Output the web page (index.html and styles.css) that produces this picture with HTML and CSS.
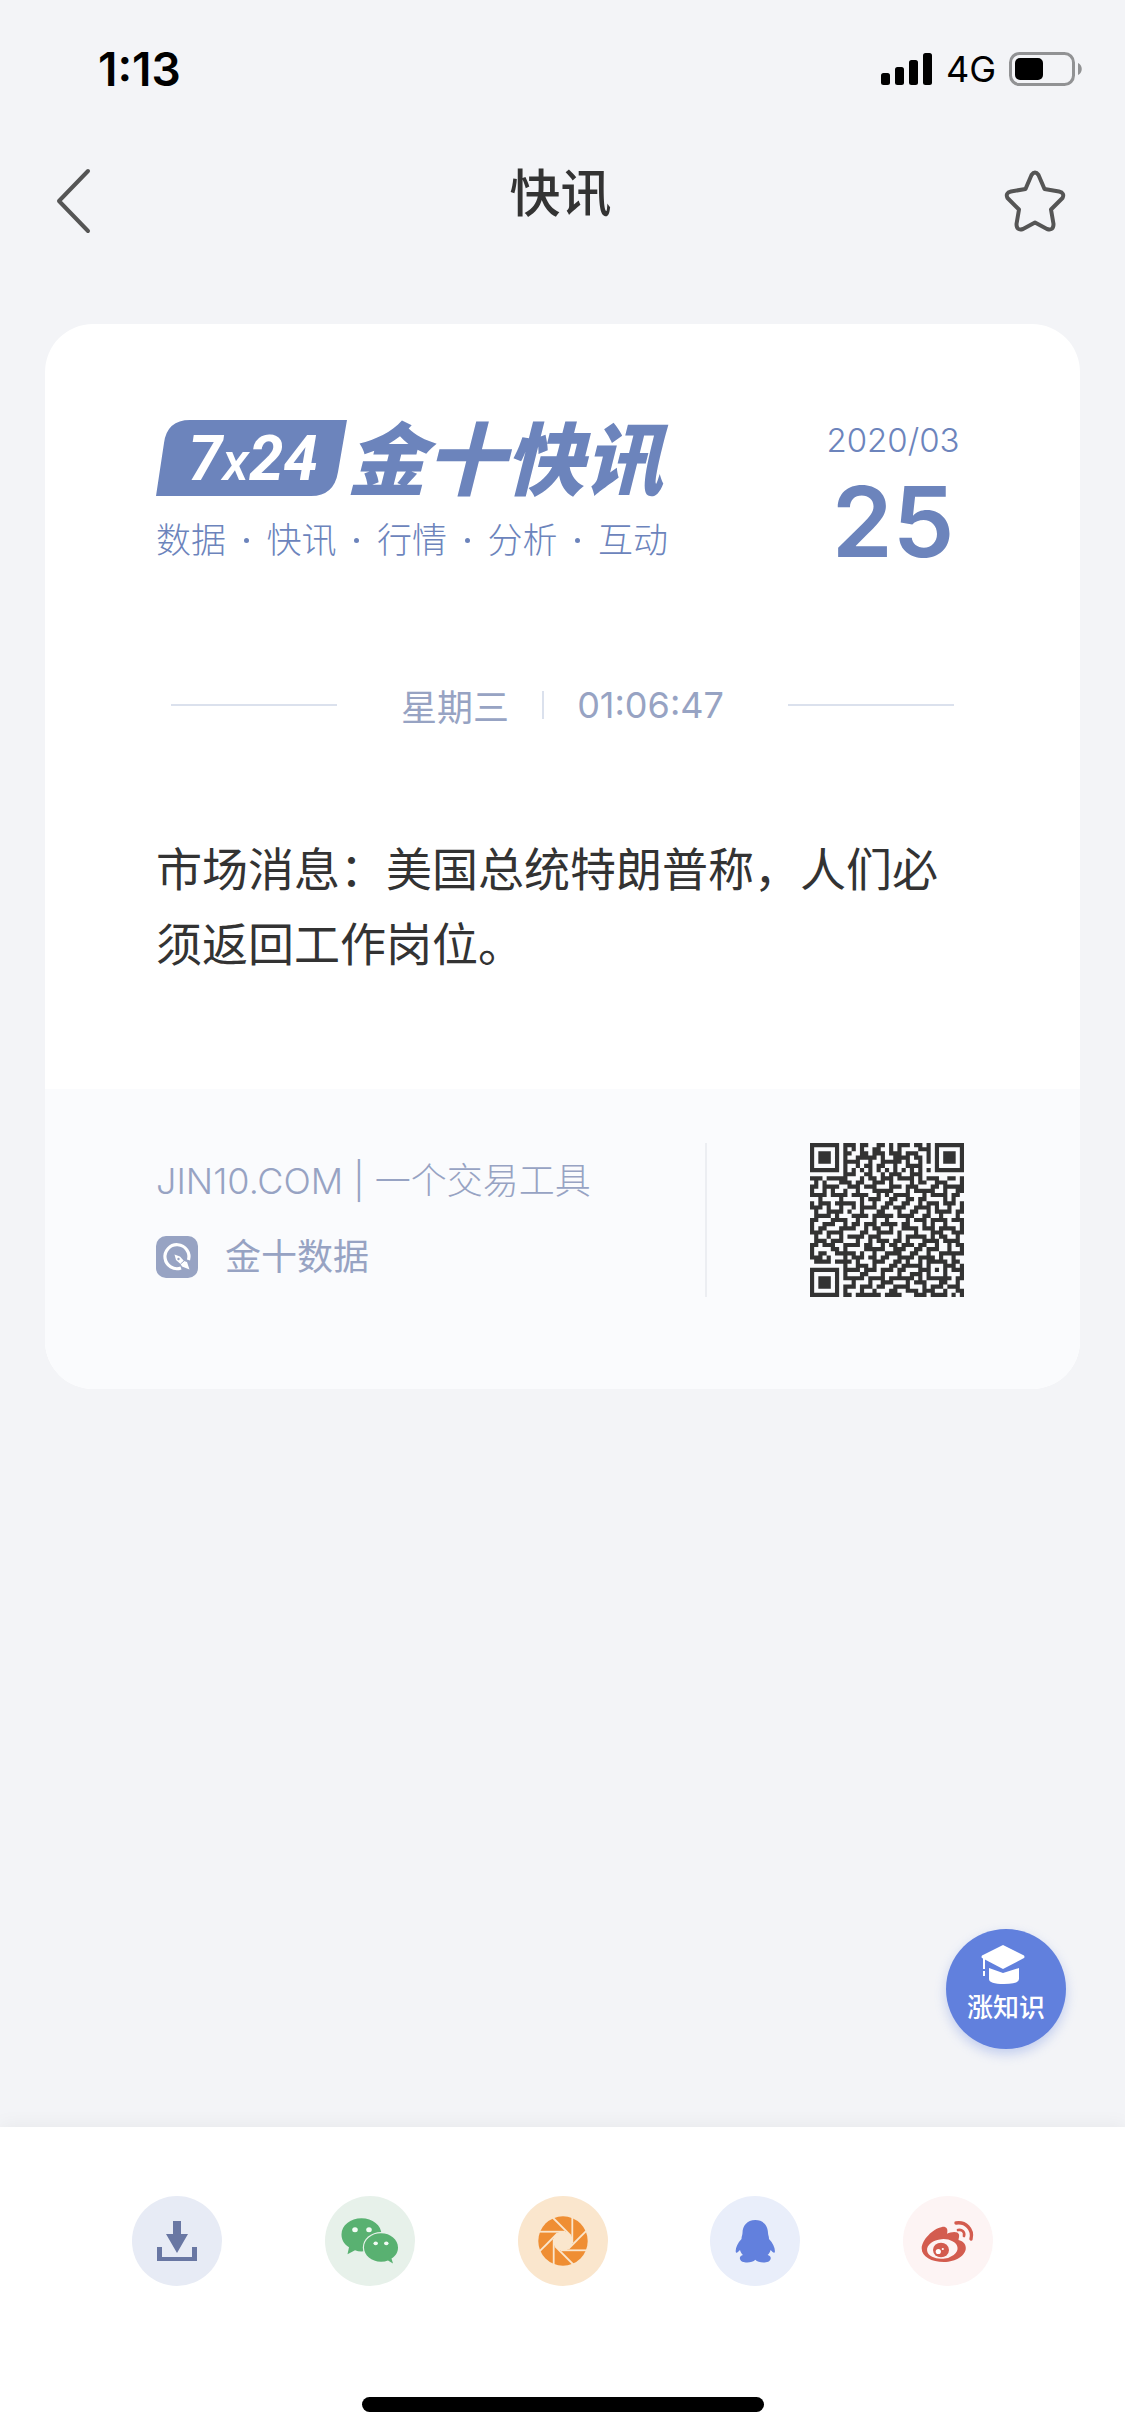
FILE: index.html
```html
<!DOCTYPE html>
<html lang="zh-CN">
<head>
<meta charset="utf-8">
<meta name="viewport" content="width=device-width, initial-scale=1">
<title>快讯</title>
<link rel="stylesheet" href="styles.css">
</head>
<body>
<div class="app">
  <div class="status">
    <span class="clock">1:13</span>
    <div class="signals">
      <svg width="52" height="32" viewBox="0 0 52 32" aria-hidden="true"><rect x="0" y="20" width="9" height="12" rx="2.5"/><rect x="14" y="14" width="9" height="18" rx="2.5"/><rect x="28" y="7" width="9" height="25" rx="2.5"/><rect x="42" y="0" width="9" height="32" rx="2.5"/></svg>
      <span class="network">4G</span>
      <svg width="74" height="34" viewBox="0 0 74 34" aria-hidden="true"><rect x="1.5" y="1.5" width="63" height="31" rx="9" fill="none" stroke="#919294" stroke-width="3"/><rect x="6" y="6" width="28" height="22" rx="5"/><path d="M69 11c5 2 5 10 0 12z" fill="#919294"/></svg>
    </div>
  </div>
  <header class="nav">
    <button class="icon-button" aria-label="返回"><svg width="36" height="66" viewBox="0 0 36 66" fill="none" stroke="#555" stroke-width="4" stroke-linecap="round" stroke-linejoin="round"><path d="M33 3 4 33l29 30"/></svg></button>
    <h1 class="title">快讯</h1>
    <button class="icon-button" aria-label="收藏"><svg width="62" height="62" viewBox="0 0 62 62" fill="none" stroke="#555" stroke-width="4" stroke-linejoin="round"><path d="M27.500 5Q31 0 34.500 5L40.500 19 55 21.500Q61 23 58.500 28L47 39.500 49.500 54Q49.500 61 43 59L31 52.500 19 59Q12.500 61 12.500 54L15 39.500 3.500 28Q1 23 7 21.500L21.500 19Z"/></svg></button>
  </header>

  <main class="main">
    <article class="card">
      <div class="card-body">
        <div class="card-top">
          <div class="brand">
            <div class="logo">
              <svg class="badge" width="191" height="76" viewBox="0 0 191 76"><path d="M0 76 8 23Q11 0 34 0H191L182 52Q178 76 155 76Z" fill="#6c84bc"/><text x="97" y="60" class="badge-text" text-anchor="middle">7<tspan class="badge-x">x</tspan>24</text></svg>
              <span class="logo-name">金十快讯</span>
            </div>
            <p class="topics"><span>数据</span><i class="dot"></i><span>快讯</span><i class="dot"></i><span>行情</span><i class="dot"></i><span>分析</span><i class="dot"></i><span>互动</span></p>
          </div>
          <div class="date"><span class="month">2020/03</span><span class="day">25</span></div>
        </div>
        <div class="timeline">
          <span class="rule"></span>
          <div class="moment"><span>星期三</span><span class="bar"></span><time>01:06:47</time></div>
          <span class="rule"></span>
        </div>
        <p class="news">市场消息：美国总统特朗普称，人们必须返回工作岗位。</p>
      </div>
      <footer class="card-foot">
        <div class="source">
          <p class="slogan">JIN10.COM | 一个交易工具</p>
          <p class="product">
            <svg width="42" height="42" viewBox="0 0 42 42" aria-hidden="true"><rect width="42" height="42" rx="10" fill="#97a3c3"/><path d="M32.500 24A12 12 0 1 0 25 32" fill="none" stroke="#fff" stroke-width="3.200"/><path d="M18.500 18.500 24 20.500 28 25 31 26 33.500 33.500 26 30.500 24.500 28 20 24Z" fill="#fff"/><circle cx="22.500" cy="23" r="1.200" fill="#97a3c3"/><path d="m24.500 28 4-3.500" stroke="#97a3c3"/></svg>
            金十数据
          </p>
        </div>
        <svg class="qr" width="154" height="154" viewBox="0 0 37 37" role="img" aria-label="二维码"><path id="qr-modules" fill="#333"/></svg>
      </footer>
    </article>
  </main>

  <button class="learn">
    <svg class="cap" width="44" height="40" viewBox="0 0 44 40" fill="#fff" aria-hidden="true"><path d="M22 0 43 10.500Q44 12 43 13L22 24 1 13Q0 12 1 10.500Z"/><path d="m8 23 14 5 16-5v11q0 5-15 5T8 34z"/><path d="M2 13h2v11H2zM2 26h2v5H2z"/></svg>
    <span>涨知识</span>
  </button>

  <div class="share">
    <div class="share-row">
      <button class="share-item save" aria-label="保存"><svg viewBox="0 0 90 90"><path fill="#6977a3" d="M41 25h8v13h7L45 57 34 38h7zM25 51h5v10h30V51h5v14H25z"/></svg></button>
      <button class="share-item wechat" aria-label="微信"><svg viewBox="0 0 90 90" fill="#59b171"><path d="M36.500 22.300c-11 0-20 7-20 16.300 0 5.400 2.500 9.600 7.500 12.600l-1.500 7 7.500-4q3 1.200 6.500 1.200c11 0 20-7.500 20-16.800s-9-16.300-20-16.300"/><ellipse cx="56" cy="51.500" rx="18.200" ry="15.500" fill="#e7f1ea"/><path d="M56 37.300c-9.500 0-17 6.300-17 14.200s7.500 14.200 17 14.200q4 0 7-1.200l5 3-1.500-5C71 60 73 56 73 51.500c0-7.900-7.500-14.200-17-14.200"/><g fill="#f2fbf4"><ellipse cx="30" cy="33.700" rx="2.800" ry="2.500"/><ellipse cx="44" cy="33.700" rx="2.800" ry="2.500"/><ellipse cx="50.700" cy="47.300" rx="2.200" ry="1.900"/><ellipse cx="61.300" cy="47.300" rx="2.200" ry="1.900"/></g></svg></button>
      <button class="share-item moments" aria-label="朋友圈"><svg viewBox="-45 -45 90 90"><circle r="24.700" fill="#ef8e33"/><path d="M9.300-3.900 3.900-9.300H-3.900L-9.300-3.900V3.900L-3.900 9.300H3.900L9.300 3.900Z" fill="#fae6cd"/><g stroke="#fae6cd" stroke-width="1.800"><path id="blade" d="M9.300 2V-25"/><use href="#blade" transform="rotate(45)"/><use href="#blade" transform="rotate(90)"/><use href="#blade" transform="rotate(135)"/><use href="#blade" transform="rotate(180)"/><use href="#blade" transform="rotate(225)"/><use href="#blade" transform="rotate(270)"/><use href="#blade" transform="rotate(315)"/></g></svg></button>
      <button class="share-item qq" aria-label="QQ"><svg viewBox="0 0 90 90" fill="#6280dd"><path d="M45.300 24C37 24 32.500 30 32.500 37c0 2-1 3-1 6-4 4-6 9-5.800 12.500.3 2.500 2 1 4.300-1.500.6 2 1.500 3.600 3 5-2.500.6-3.500 2-3 4 .8 4.500 12 4.500 15.300.8 3.300 3.700 14.500 3.700 15.300-.8.500-2-.5-3.400-3-4 1.500-1.400 2.400-3 3-5 2.300 2.500 4 4 4.300 1.500C65.100 52 63 47 59 43c0-3-1-4-1-6 0-7-4.400-13-12.700-13"/></svg></button>
      <button class="share-item weibo" aria-label="微博"><svg viewBox="0 0 90 90"><path fill="#d35c4f" d="M39 31c4-.8 6.500 2 5 6.800 4-2 11-3 12 .8.500 2-.5 4-.5 5.400 4 1 7.300 3.500 7.300 8C62.800 59.500 53 66 41 66c-12.500 0-22.300-5.300-22.300-13.500C18.700 44 30 32.500 39 31"/><ellipse cx="39.300" cy="53" rx="15.300" ry="9.800" fill="#fdf4f4" transform="rotate(-5 39 53)"/><ellipse cx="38" cy="54" rx="8" ry="7.300" fill="#d35c4f"/><circle cx="35.300" cy="55.500" r="2.600" fill="#fff"/><circle cx="39.800" cy="53" r="1.100" fill="#fff"/><g fill="none" stroke="#d35c4f" stroke-linecap="round"><path stroke-width="3.400" d="M53 27c9.500-1.500 17.500 6 15 16"/><path stroke-width="2.700" d="M55 34c4-1 7 2 6 6"/></g></svg></button>
    </div>
    <div class="home"></div>
  </div>
</div>
<script src="qr.js"></script>
</body>
</html>
```
FILE: styles.css
```css
* { box-sizing: border-box; }
body {
  margin: 0;
  background: #f3f4f7;
  color: #333;
  font-family: Inter, "Noto Sans CJK SC", sans-serif;
}
h1, p { margin: 0; }
button {
  padding: 0;
  border: 0;
  background: none;
  font: inherit;
  color: inherit;
}
svg { display: block; flex: none; }

.app {
  position: relative;
  display: flex;
  flex-direction: column;
  min-height: 100vh;
}

.status {
  display: flex;
  justify-content: space-between;
  align-items: center;
  height: 138px;
  padding: 0 42px 0 98px;
  color: #000;
}
.clock { font-size: 46px; font-weight: 600; }
.signals { display: flex; align-items: center; gap: 13px; }
.network { font-size: 36px; font-weight: 400; }

.nav {
  display: grid;
  grid-template-columns: 1fr auto 1fr;
  align-items: center;
  height: 126px;
  padding: 0 59px 0 55px;
}
.icon-button { justify-self: start; }
.icon-button:last-child { justify-self: end; }
.title {
  padding-bottom: 14px;
  font-size: 51px;
  font-weight: 500;
  line-height: 60px;
}

.main { flex: 1; padding: 60px 45px; }
.card {
  overflow: hidden;
  border-radius: 48px;
  background: #fff;
}
.card-body { padding: 96px 112px 107px 111px; }
.card-top {
  display: flex;
  justify-content: space-between;
  padding-right: 5px;
  color: #6c84bc;
}
.brand { width: 512px; }
.logo { display: flex; height: 76px; }
.badge-text {
  fill: #fff;
  font: italic 700 62px Roboto, sans-serif;
}
.badge-x { font-size: 54px; font-weight: 500; }
.logo-name {
  font-size: 79px;
  font-style: italic;
  font-weight: 900;
  line-height: 80px;
  white-space: nowrap;
}
.topics {
  display: flex;
  justify-content: space-between;
  align-items: center;
  margin-top: 23px;
  font-size: 35px;
  font-weight: 300;
  line-height: 42px;
}
.dot { width: 5px; height: 5px; border-radius: 50%; background: currentColor; }
.date {
  display: flex;
  flex-direction: column;
  align-items: center;
  width: 140px;
}
.month { font-size: 33px; font-weight: 300; line-height: 40px; }
.day { margin-top: 14px; font-size: 98px; font-weight: 600; line-height: 96px; }

.timeline {
  display: flex;
  justify-content: space-between;
  align-items: center;
  height: 44px;
  margin: 113px 14px 0 15px;
  color: #97a3c3;
  font-size: 36px;
}
.rule { width: 166px; height: 2px; background: #dbe1ed; }
.moment { display: flex; align-items: center; gap: 33px; }
.bar { width: 2px; height: 28px; background: #dbe1ed; }

.news {
  margin-top: 105px;
  font-size: 46px;
  line-height: 75px;
}

.card-foot {
  display: flex;
  justify-content: space-between;
  align-items: flex-start;
  padding: 54px 116px 92px 111px;
  background: #fafbfd;
  color: #97a3c3;
}
.source {
  display: flex;
  flex: 1;
  flex-direction: column;
  gap: 32px;
  height: 154px;
  margin-right: 103px;
  padding-top: 16px;
  border-right: 2px solid #eceef2;
  font-size: 36px;
  line-height: 44px;
}
.slogan { font-weight: 300; }
.product { display: flex; align-items: center; gap: 27px; }

.learn {
  position: absolute;
  right: 59px;
  bottom: 387px;
  display: flex;
  flex-direction: column;
  align-items: center;
  gap: 6px;
  width: 120px;
  height: 120px;
  padding-top: 16px;
  border-radius: 50%;
  background: #6180dd;
  box-shadow: 0 5px 12px #6180dd55;
  color: #fff;
  font-size: 26px;
  font-weight: 500;
  line-height: 34px;
}
.cap { margin-right: 6px; }

.share {
  padding: 69px 132px 24px;
  background: #fff;
  box-shadow: 0 -2px 18px #0000000d;
}
.share-row { display: flex; justify-content: space-between; }
.share-item { width: 90px; height: 90px; border-radius: 50%; }
.save { background: #e7ebf5; }
.wechat { background: #e7f1ea; }
.moments { background: #fae6cd; }
.qq { background: #e9eefa; }
.weibo { background: #fdf4f4; }
.home {
  width: 402px;
  height: 15px;
  margin: 111px auto 0;
  border-radius: 8px;
  background: #000;
}
```
FILE: qr.js
```js
// One string per row of the code; "1" is a dark module.
const rows = [
  "1111111011101100110101110110101111111",
  "1000001010101001100101000011101000001",
  "1011101011001101110111011100101011101",
  "1011101010011111010011110110101011101",
  "1011101011110010011111010010101011101",
  "1000001010010110110010011110001000001",
  "1111111010101010101010101010101111111",
  "0000000011100110010111001110000000000",
  "1110111110001011011101111010111001101",
  "0101000111011001110100001011001110001",
  "1101111001110111000111011100011011111",
  "1001010010010001111100010111110010011",
  "1111011110111100101011110001011110110",
  "0010000100001011100110011011000010100",
  "1011101111101001001100110010111011101",
  "1110100100101111011011100111101001001",
  "0100111101001000110001001100101111011",
  "0111101000111101111101111001100100010",
  "1100011110010001001000010111011110111",
  "1001110010110111011110110001010010001",
  "1011000111100101100100111101110111101",
  "1110111100001100111101000100011100111",
  "0100100101111011100001011111010110010",
  "0111011100010010111011010001111011110",
  "1101110011110110010110111011001001011",
  "1000011010000111110011100110111001001",
  "1011001111101001001111001100100111111",
  "1110100010111011011001111011110100100",
  "0111101111010001110011010010111110110",
  "0000000010011101000110111110100011101",
  "1111111011110111011101100011101010111",
  "1000001010001100010001001110100010001",
  "1011101011111011110111111010111111011",
  "1011101000100010011100010111000110010",
  "1011101011101110110011110001011101110",
  "1000001010001001000110011101110010011",
  "1111111011011111101111000111011110101"
];
document.getElementById("qr-modules").setAttribute("d",
  rows.map((row, y) => [...row].map((m, x) => m === "1" ? `M${x} ${y}h1v1h-1z` : "").join("")).join(""));
```
